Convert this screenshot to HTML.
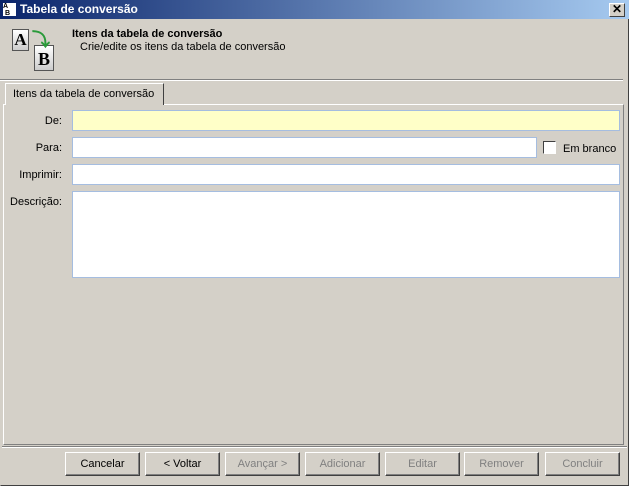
<!DOCTYPE html>
<html><head><meta charset="utf-8"><style>
*{box-sizing:border-box;margin:0;padding:0}
body{width:629px;height:486px;background:#d4d0c8;font-family:"Liberation Sans",sans-serif;font-size:11px;position:relative;overflow:hidden;color:#000}
.a{position:absolute}
.title{left:0;top:0;width:629px;height:19px;background:linear-gradient(90deg,#0a246a,#a6caf0);color:#fff;font-weight:bold;font-size:12px;line-height:19px;padding-left:20px}
.fld{position:absolute;background:#fff;border:1px solid #a5bde0}
.lbl{position:absolute;width:62px;text-align:right}
.btn{position:absolute;top:452px;width:75px;height:24px;background:#d4d0c8;border:1px solid;border-color:#fff #404040 #404040 #fff;box-shadow:inset -1px -1px 0 #808080;text-align:center;line-height:22px;color:#808080}
.btn.e{color:#000}
</style></head><body>
<div class="a" style="left:0;top:0;width:629px;height:486px;border:1px solid;border-color:#d4d0c8 #404040 #404040 #d4d0c8"></div>
<div class="a title">Tabela de conversão</div>
<div class="a" style="left:3px;top:3px;width:13px;height:13px;background:#fff;font-size:7px;color:#000;font-weight:bold;line-height:7px">A<br>&nbsp;B</div>
<div class="a" style="left:609px;top:3px;width:16px;height:14px;background:#d4d0c8;border:1px solid;border-color:#fff #404040 #404040 #fff;font-size:12px;line-height:11px;text-align:center;font-weight:bold">✕</div>
<div class="a" style="left:12px;top:29px;width:17px;height:22px;background:linear-gradient(#fff,#ccc);border:1px solid #555;font-family:'Liberation Serif',serif;font-weight:bold;font-size:17px;text-align:center;line-height:20px">A</div>
<div class="a" style="left:34px;top:45px;width:20px;height:26px;background:linear-gradient(#fff,#ccc);border:1px solid #555;font-family:'Liberation Serif',serif;font-weight:bold;font-size:18px;text-align:center;line-height:26px">B</div>
<div class="a" style="left:32px;top:26px;color:#2a9a3a;font-size:18px;font-weight:bold">⤵</div>
<div class="a" style="left:72px;top:28px;font-weight:bold">Itens da tabela de conversão</div>
<div class="a" style="left:80px;top:41px">Crie/edite os itens da tabela de conversão</div>
<div class="a" style="left:0;top:79px;width:623px;height:2px;border-top:1px solid #808080;border-bottom:1px solid #fff"></div>
<div class="a" style="left:3px;top:104px;width:621px;height:341px;border:1px solid;border-color:#fff #808080 #808080 #fff"></div>
<div class="a" style="left:5px;top:83px;width:159px;height:22px;background:#d4d0c8;border:1px solid;border-bottom:none;border-color:#fff #404040 #fff #fff;padding:4px 0 0 7px">Itens da tabela de conversão</div>
<div class="lbl" style="left:0;top:115px">De:</div>
<div class="lbl" style="left:0;top:142px">Para:</div>
<div class="lbl" style="left:0;top:169px">Imprimir:</div>
<div class="lbl" style="left:0;top:196px">Descrição:</div>
<div class="fld" style="left:72px;top:110px;width:548px;height:21px;background:#ffffc8"></div>
<div class="fld" style="left:72px;top:137px;width:465px;height:21px"></div>
<div class="a" style="left:543px;top:141px;width:13px;height:13px;background:#fff;border:1px solid;border-color:#404040 #fff #fff #404040"></div>
<div class="a" style="left:563px;top:143px">Em branco</div>
<div class="fld" style="left:72px;top:164px;width:548px;height:21px"></div>
<div class="fld" style="left:72px;top:191px;width:548px;height:87px"></div>
<div class="a" style="left:2px;top:446px;width:625px;height:2px;border-top:1px solid #808080;border-bottom:1px solid #fff"></div>
<div class="btn e" style="left:65px">Cancelar</div>
<div class="btn e" style="left:145px">&lt; Voltar</div>
<div class="btn" style="left:225px">Avançar &gt;</div>
<div class="btn" style="left:305px">Adicionar</div>
<div class="btn" style="left:385px">Editar</div>
<div class="btn" style="left:464px">Remover</div>
<div class="btn" style="left:545px">Concluir</div>
</body></html>
